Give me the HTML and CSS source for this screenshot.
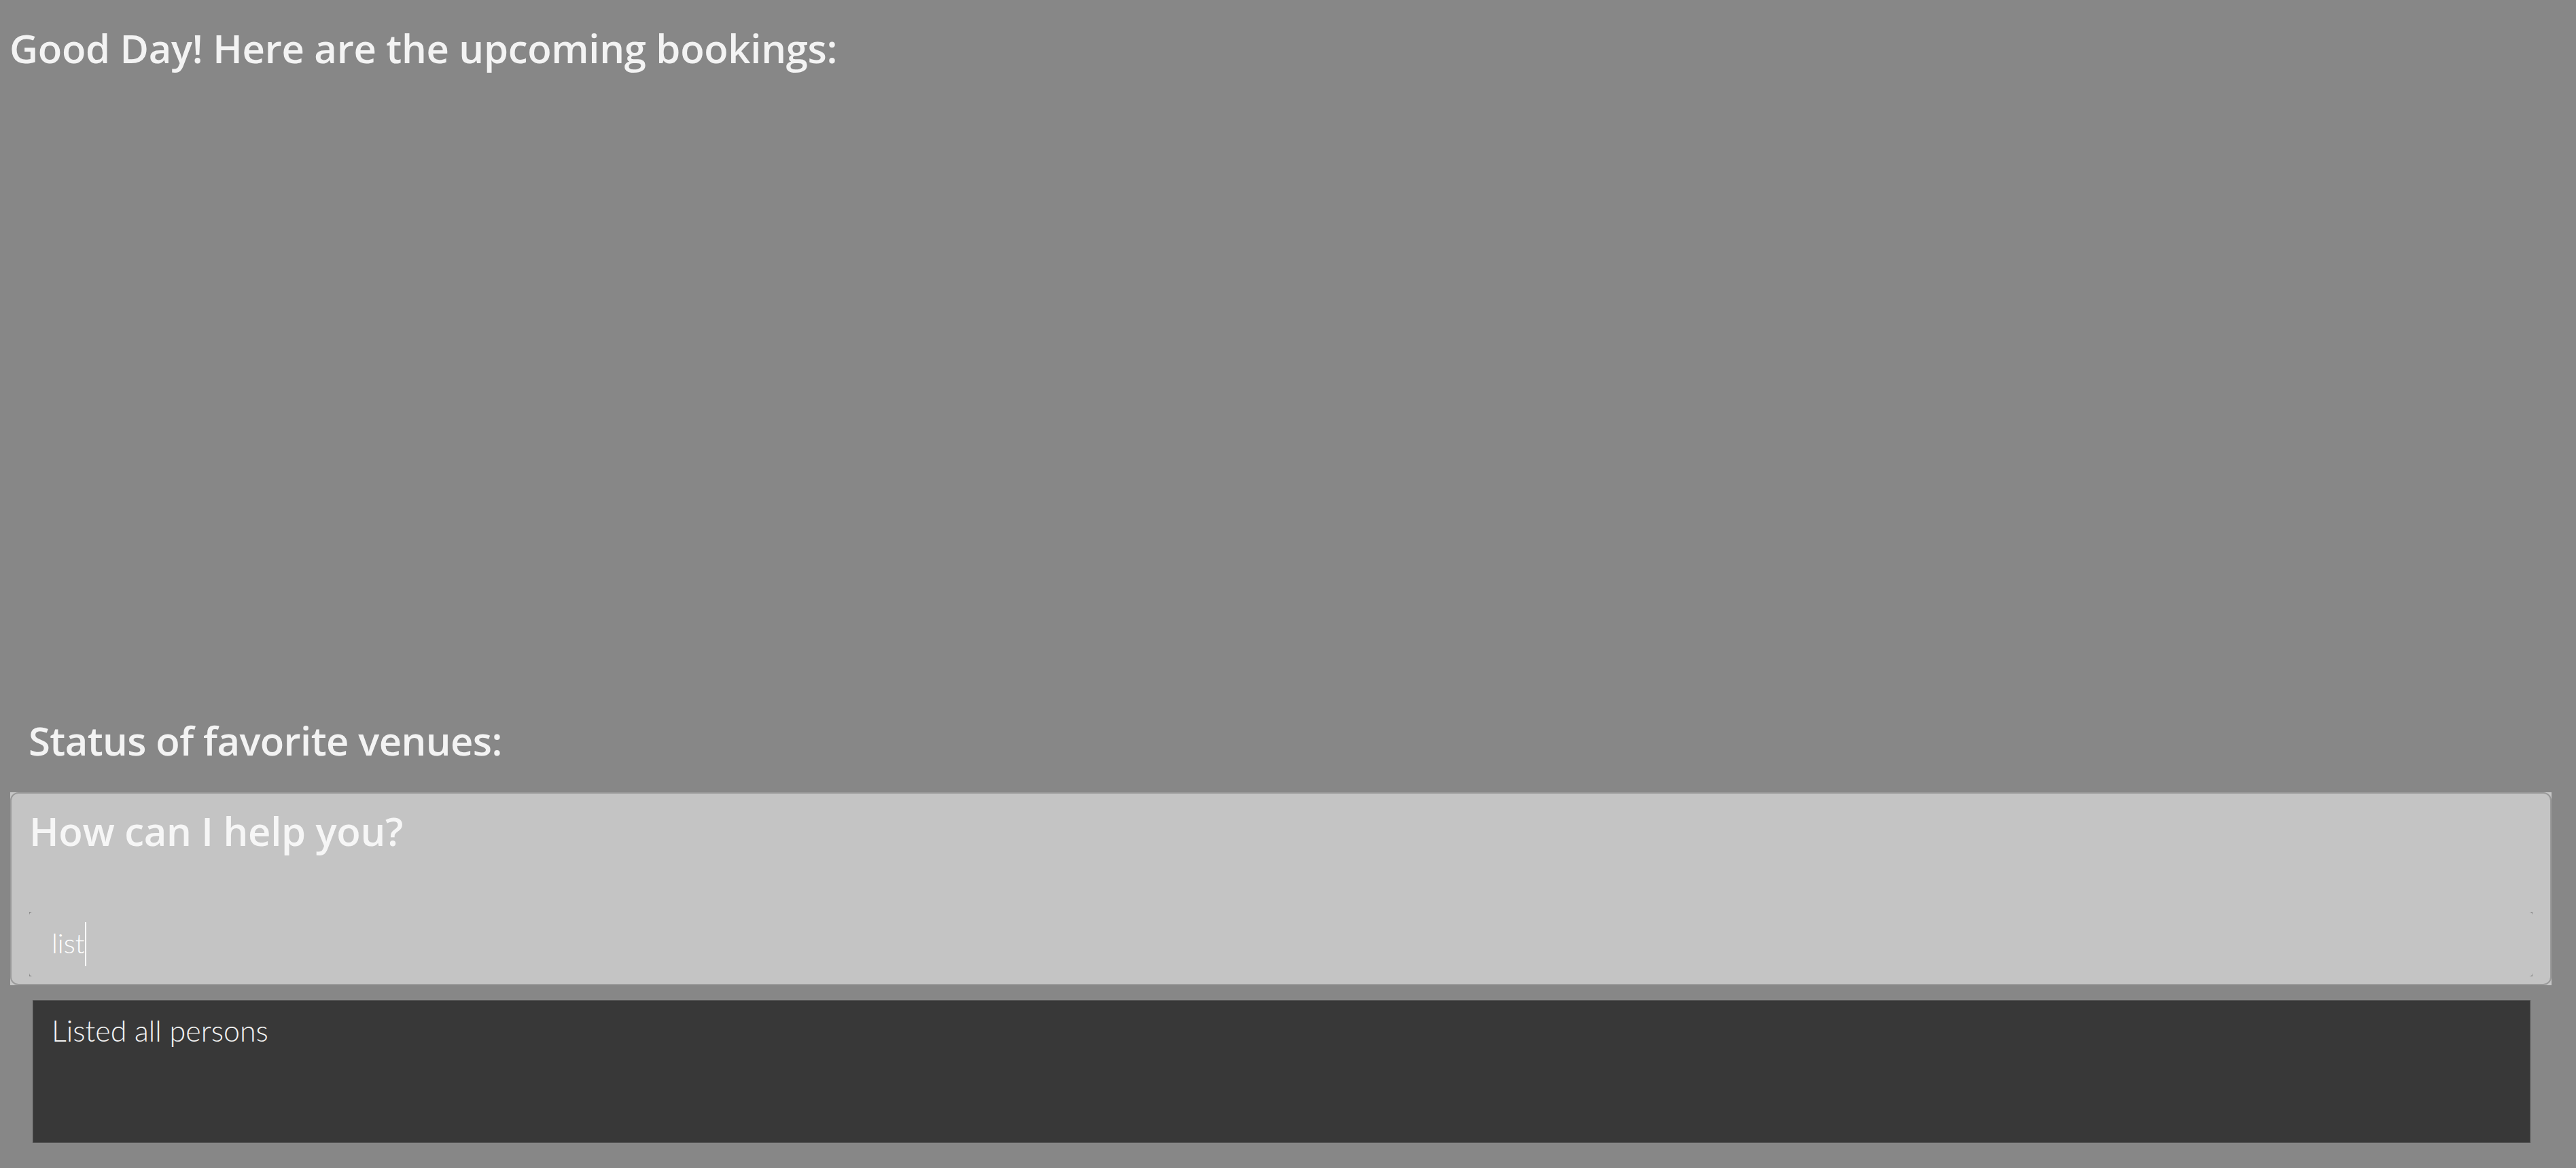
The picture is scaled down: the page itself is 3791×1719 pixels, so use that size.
FILE: index.html
```html
<!DOCTYPE html>
<html lang="en">
<head>
<meta charset="utf-8">
<title>Bookings</title>
<link rel="stylesheet" href="styles.css">
</head>
<body>
<div class="app">
  <h1 class="title">Good Day! Here are the upcoming bookings:</h1>
  <h2 class="status">Status of favorite venues:</h2>
  <div class="panel-frame">
    <div class="panel">
      <div class="prompt">How can I help you?</div>
      <div class="field-frame">
        <div class="field">
          <span class="field-text">list</span><span class="caret"></span>
        </div>
      </div>
    </div>
  </div>
  <div class="result">
    <div class="result-text">Listed all persons</div>
  </div>
</div>
</body>
</html>
```

FILE: styles.css
```css
html, body {
  margin: 0;
  padding: 0;
  background: #878787;
}

.app {
  display: flex;
  flex-direction: column;
  height: 1719px;
  box-sizing: border-box;
  padding-bottom: 37px;
}

.title,
.status,
.prompt {
  margin: 0;
  font-family: "Open Sans", "Noto Sans", sans-serif;
  font-weight: 600;
  font-size: 58px;
  line-height: 58px;
  letter-spacing: -0.3px;
  color: #f3f3f3;
  white-space: nowrap;
}

.title {
  padding: 42px 0 0 14px;
}

.status {
  margin-top: auto;
  padding-left: 42px;
  letter-spacing: -0.6px;
}

.panel-frame {
  margin: 47px 36px 0 15px;
  background: #c6c6c6;
}

.panel {
  border: 2px solid #9a9a9a;
  border-radius: 12px;
  background: #c4c4c4;
  padding: 26px 26px 11px 26px;
}

.prompt {
  color: #f6f6f6;
}

.field-frame {
  margin-top: 90px;
  background: #8a8a8a;
  height: 95px;
}

.field {
  height: 100%;
  background: #c4c4c4;
  border-radius: 5px;
  display: flex;
  align-items: flex-start;
  padding-left: 33px;
}

.field-text {
  margin-top: 26px;
  font-family: "Lato", "Open Sans", sans-serif;
  font-weight: 300;
  font-size: 40px;
  line-height: 40px;
  color: #ffffff;
}

.caret {
  width: 2px;
  height: 65px;
  margin-top: 15px;
  margin-left: 1px;
  background: #ffffff;
}

.result {
  margin: 22px 67px 0 48px;
  height: 210px;
  box-sizing: border-box;
  background: #383838;
  border: 1px solid #4f4f4f;
  padding: 22px 0 0 27px;
}

.result-text {
  font-family: "Lato", "Open Sans", sans-serif;
  font-weight: 300;
  font-size: 43px;
  line-height: 43px;
  color: #f4f4f4;
}
```
